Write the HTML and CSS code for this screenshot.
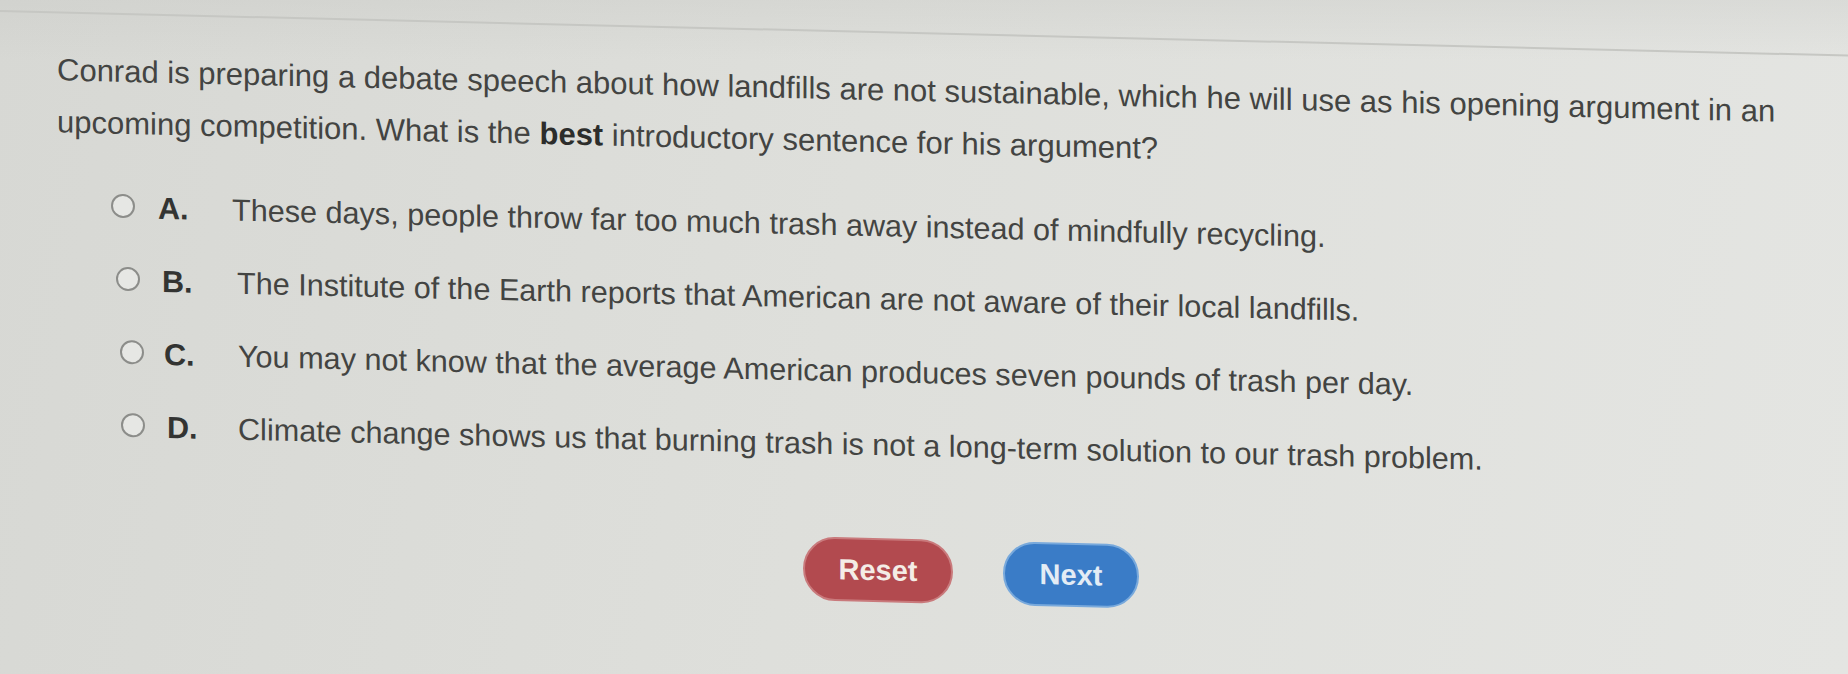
FILE: index.html
```html
<!DOCTYPE html>
<html lang="en">
<head>
<meta charset="utf-8">
<title>Question</title>
<link rel="stylesheet" href="styles.css">
</head>
<body>
<div class="screen">
  <div class="content">
    <div class="topline"></div>
    <p class="question">Conrad is preparing a debate speech about how landfills are not sustainable, which he will use as his opening argument in an upcoming competition. What is the <b>best</b> introductory sentence for his argument?</p>
    <ul class="options">
      <li class="option"><span class="radio"></span><span class="letter">A.</span><span class="text">These days, people throw far too much trash away instead of mindfully recycling.</span></li>
      <li class="option"><span class="radio"></span><span class="letter">B.</span><span class="text">The Institute of the Earth reports that American are not aware of their local landfills.</span></li>
      <li class="option"><span class="radio"></span><span class="letter">C.</span><span class="text">You may not know that the average American produces seven pounds of trash per day.</span></li>
      <li class="option"><span class="radio"></span><span class="letter">D.</span><span class="text">Climate change shows us that burning trash is not a long-term solution to our trash problem.</span></li>
    </ul>
    <div class="actions">
      <button class="btn btn-reset">Reset</button>
      <button class="btn btn-next">Next</button>
    </div>
  </div>
</div>
</body>
</html>
```
FILE: styles.css
```css
html, body {
  margin: 0;
  padding: 0;
}
body {
  width: 1848px;
  height: 674px;
  overflow: hidden;
  background: linear-gradient(100deg, #d7d8d4 0%, #dedfdb 45%, #e4e5e2 100%);
  font-family: "Liberation Sans", Arial, sans-serif;
  color: #434442;
}
.screen {
  width: 1848px;
  height: 674px;
  overflow: hidden;
  background: linear-gradient(180deg, rgba(200,201,197,0.35) 0px, rgba(200,201,197,0) 60px);
}
.content {
  transform: skewY(1.38deg);
  transform-origin: 0 0;
  padding-left: 57px;
  width: 1770px;
}
.topline {
  height: 10px;
  margin-left: -57px;
  width: 1900px;
  border-bottom: 2px solid #c6c7c3;
}
.question {
  margin: 31px 0 0 0;
  font-size: 31px;
  line-height: 52px;
  width: 1760px;
}
.question b {
  color: #2c2d2b;
}
.options {
  list-style: none;
  margin: 21px 0 0 0;
  padding: 0;
}
.option {
  display: flex;
  align-items: center;
  height: 73px;
  font-size: 30.6px;
  line-height: 73px;
}
.radio {
  width: 20px;
  height: 20px;
  border: 2px solid #8c8d8a;
  border-radius: 50%;
  background: #e6e7e4;
  margin-left: 54px;
  margin-bottom: 4px;
  flex: none;
}
.letter {
  font-weight: bold;
  color: #333432;
  margin-left: 23px;
  width: 74px;
}
.option:nth-child(2) .radio { margin-left: 59px; }
.option:nth-child(2) .letter { margin-left: 22px; width: 75px; }
.option:nth-child(3) .radio { margin-left: 63px; }
.option:nth-child(3) .letter { margin-left: 20px; width: 74px; }
.option:nth-child(4) .radio { margin-left: 64px; }
.option:nth-child(4) .letter { margin-left: 22px; width: 71px; }
.text {
  white-space: nowrap;
}
.actions {
  display: flex;
  gap: 50px;
  margin: 57px 0 0 746px;
}
.btn {
  font-family: "Liberation Sans", Arial, sans-serif;
  font-weight: bold;
  font-size: 29px;
  height: 64px;
  border-radius: 32px;
  border: 2px solid transparent;
  padding: 0;
  cursor: pointer;
}
.btn-reset {
  width: 150px;
  background: #b24a4f;
  border-color: #c97a7c;
  color: #f4ece6;
}
.btn-next {
  width: 136px;
  background: #3a7cc7;
  border-color: #78a9dc;
  color: #e3ecf5;
}
```
